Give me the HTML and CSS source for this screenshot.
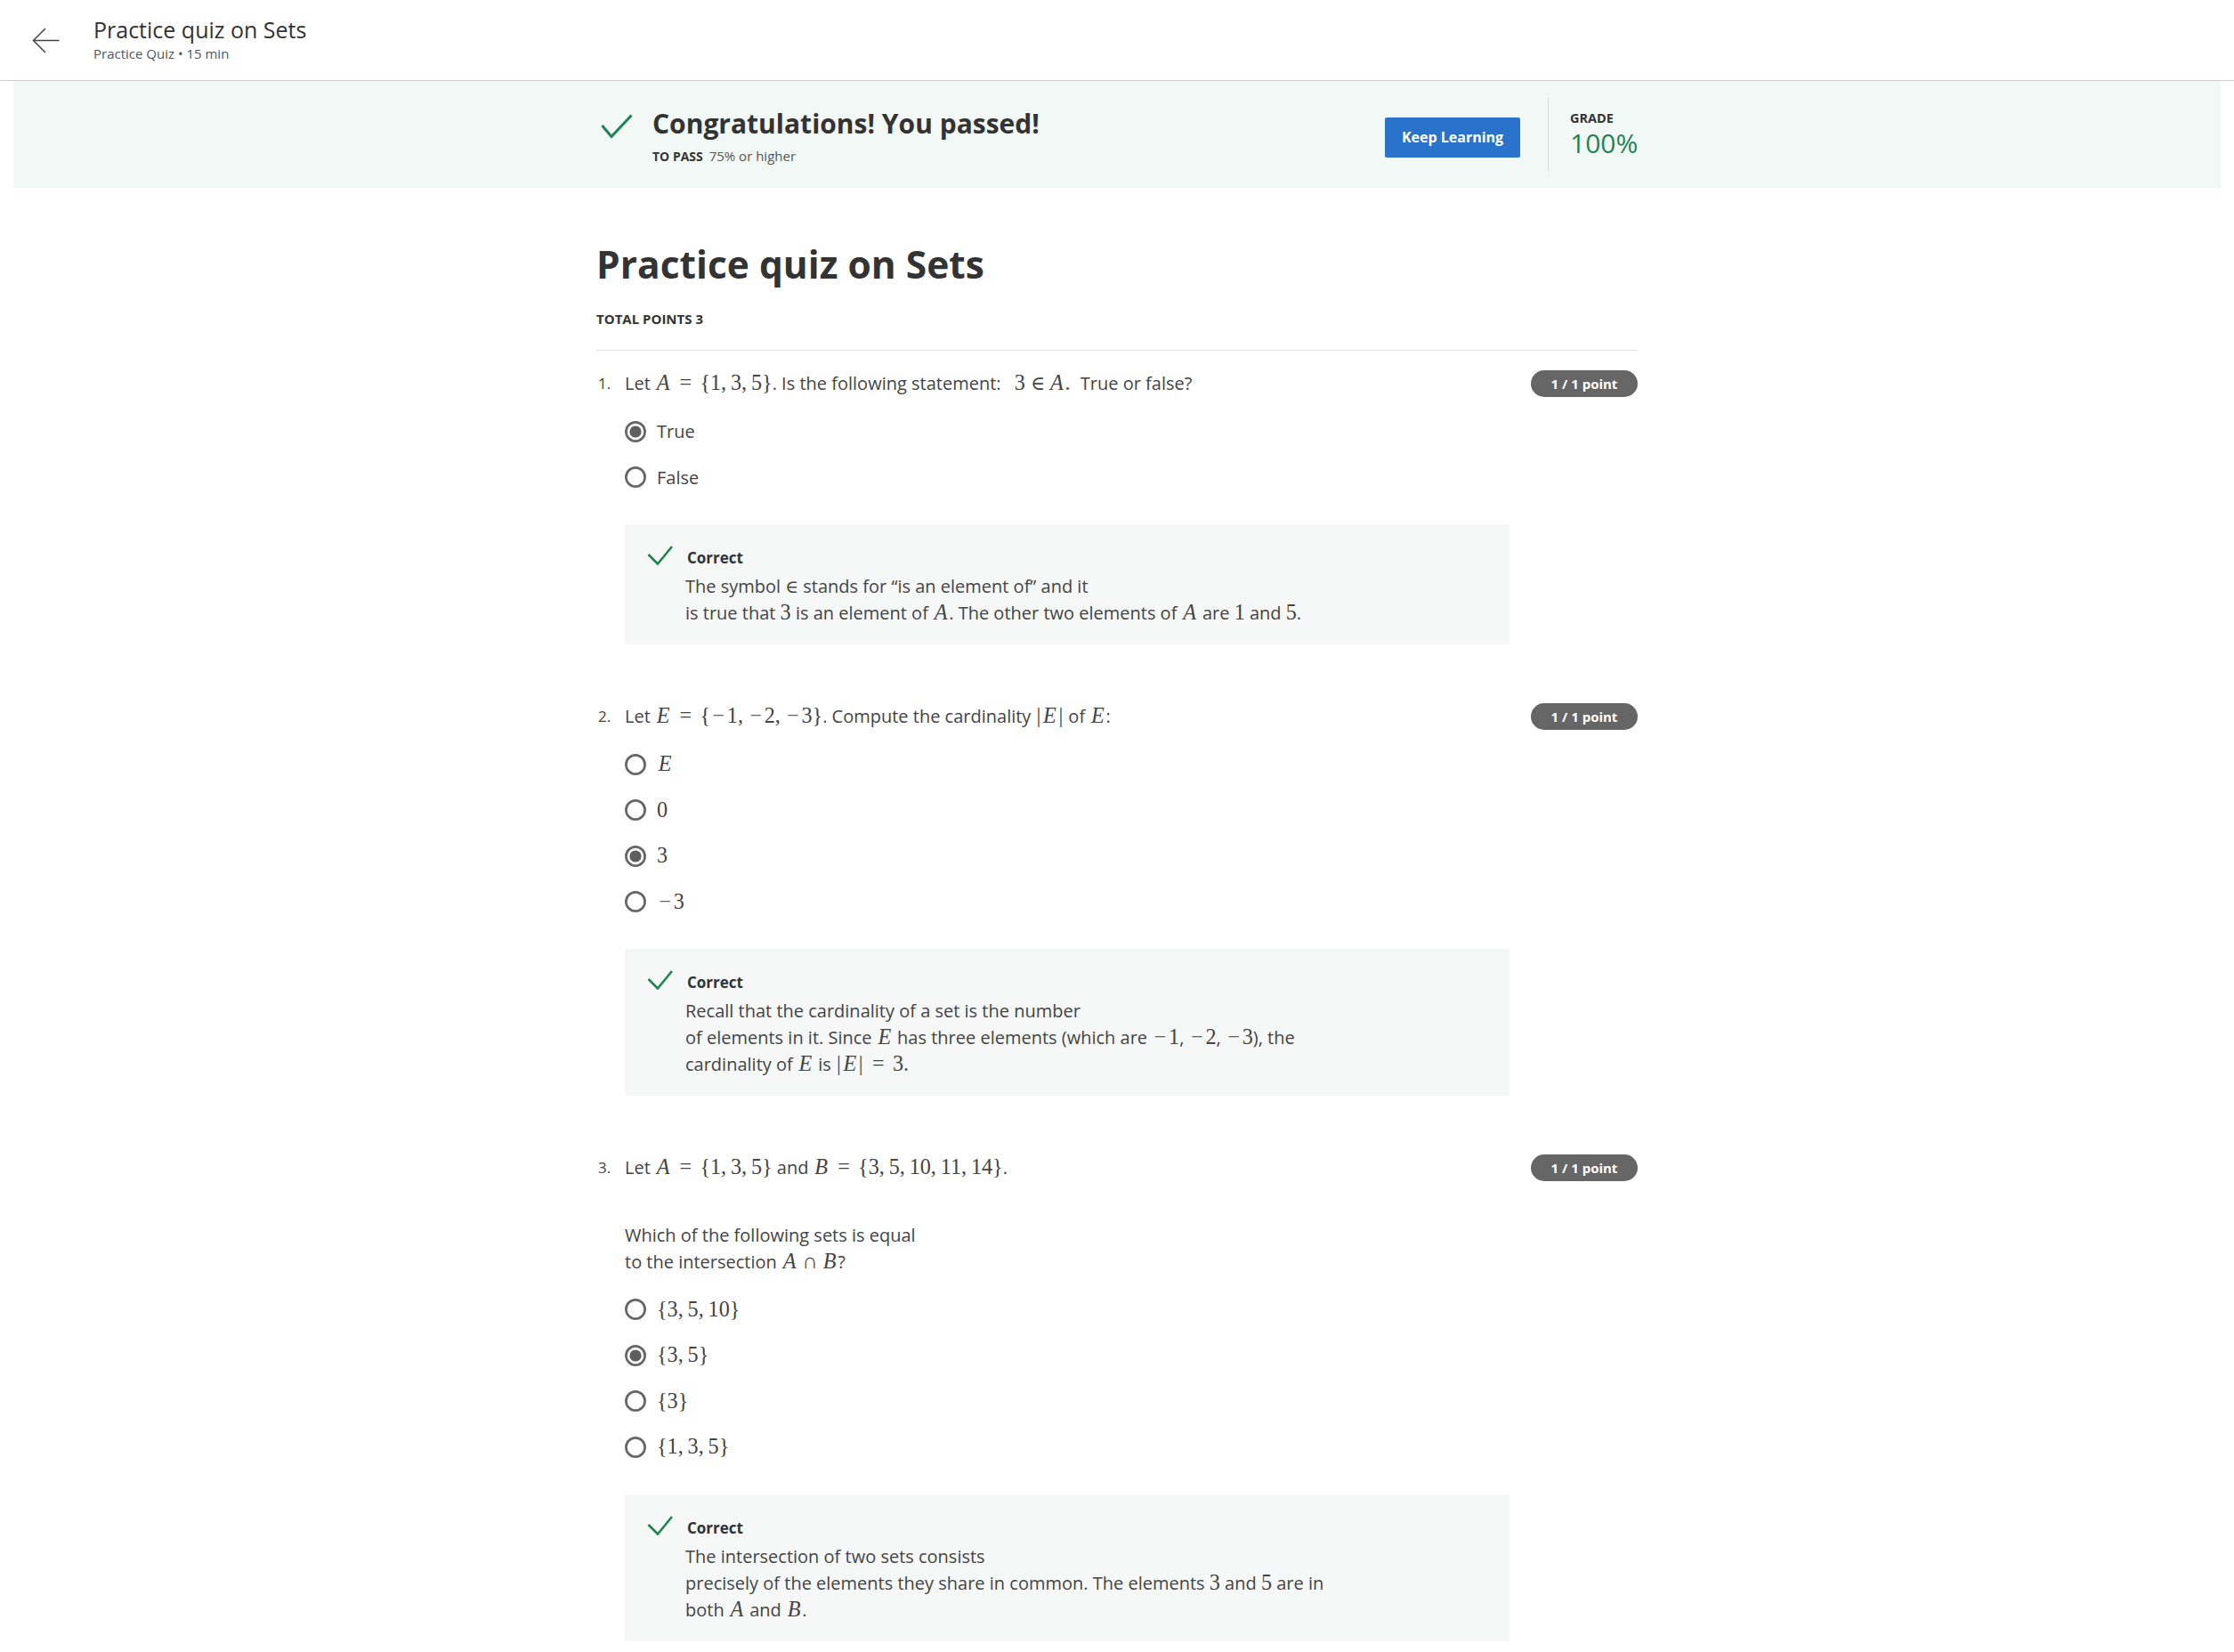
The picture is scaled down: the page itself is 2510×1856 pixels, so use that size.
FILE: index.html
```html
<!DOCTYPE html>
<html lang="en">
<head>
<meta charset="utf-8">
<title>Practice quiz on Sets</title>
<link rel="stylesheet" href="styles.css">
</head>
<body>
<header class="topbar">
  <svg class="back" viewBox="0 0 31 29" aria-hidden="true"><path d="M1.5 14.5H30.5M15 1L1.5 14.5L15 28" fill="none" stroke="#444" stroke-width="1.5"/></svg>
  <div class="topbar-text">
    <div class="topbar-title">Practice quiz on Sets</div>
    <div class="topbar-sub">Practice Quiz • 15 min</div>
  </div>
</header>

<section class="banner">
  <div class="banner-inner">
    <div class="pass">
      <svg class="pass-icon" viewBox="0 0 36 27" aria-hidden="true"><path d="M1.5 13L12 25.5L34.5 1.5" fill="none" stroke="#1f8354" stroke-width="3"/></svg>
      <div>
        <div class="pass-title">Congratulations! You passed!</div>
        <div class="pass-req"><b>TO PASS</b> 75% or higher</div>
      </div>
    </div>
    <button class="keep">Keep Learning</button>
    <div class="vdiv"></div>
    <div class="grade">
      <div class="grade-label">GRADE</div>
      <div class="grade-val">100%</div>
    </div>
  </div>
</section>

<main class="main">
  <h1>Practice quiz on Sets</h1>
  <div class="total">TOTAL POINTS 3</div>
  <div class="rule"></div>

  <div class="q q1">
    <div class="qnum">1.</div>
    <div class="qbody">
      <div class="qtext">Let <span class="m"><i>A</i><span class="rel">=</span>{1,&#8201;3,&#8201;5}</span>. Is the following statement: <span class="m gapl">3<span class="rel el">∈</span><i>A</i>.</span> True or false?</div>
      <div class="opts">
        <div class="opt"><svg class="radio" viewBox="0 0 24 24"><circle cx="12" cy="12" r="10.6" fill="none" stroke="#666" stroke-width="2.7"/><circle cx="12" cy="12" r="6.6" fill="#5f5f5f"/></svg><span>True</span></div>
        <div class="opt"><svg class="radio" viewBox="0 0 24 24"><circle cx="12" cy="12" r="10.6" fill="none" stroke="#666" stroke-width="2.7"/></svg><span>False</span></div>
      </div>
      <div class="fb">
        <div class="fb-head"><svg class="fb-icon" viewBox="0 0 29 22"><path d="M1.5 10L12 20.5L28 1" fill="none" stroke="#1f8354" stroke-width="2.6"/></svg><span class="fb-title">Correct</span></div>
        <div class="fb-text">The symbol <span class="m sm">∈</span> stands for “is an element of” and it<br>is true that <span class="m">3</span> is an element of <span class="m"><i>A</i></span>. The other two elements of <span class="m"><i>A</i></span> are <span class="m">1</span> and <span class="m">5</span>.</div>
      </div>
    </div>
    <div class="badge">1 / 1 point</div>
  </div>

  <div class="q">
    <div class="qnum">2.</div>
    <div class="qbody">
      <div class="qtext">Let <span class="m"><i>E</i><span class="rel">=</span>{<span class="neg">−</span>1,&#8201;<span class="neg">−</span>2,&#8201;<span class="neg">−</span>3}</span>. Compute the cardinality <span class="m"><span class="bar">|</span><i>E</i><span class="bar">|</span></span> of <span class="m"><i>E</i></span>:</div>
      <div class="opts">
        <div class="opt"><svg class="radio" viewBox="0 0 24 24"><circle cx="12" cy="12" r="10.6" fill="none" stroke="#666" stroke-width="2.7"/></svg><span class="m"><i>E</i></span></div>
        <div class="opt"><svg class="radio" viewBox="0 0 24 24"><circle cx="12" cy="12" r="10.6" fill="none" stroke="#666" stroke-width="2.7"/></svg><span class="m">0</span></div>
        <div class="opt"><svg class="radio" viewBox="0 0 24 24"><circle cx="12" cy="12" r="10.6" fill="none" stroke="#666" stroke-width="2.7"/><circle cx="12" cy="12" r="6.6" fill="#5f5f5f"/></svg><span class="m">3</span></div>
        <div class="opt"><svg class="radio" viewBox="0 0 24 24"><circle cx="12" cy="12" r="10.6" fill="none" stroke="#666" stroke-width="2.7"/></svg><span class="m"><span class="neg">−</span>3</span></div>
      </div>
      <div class="fb">
        <div class="fb-head"><svg class="fb-icon" viewBox="0 0 29 22"><path d="M1.5 10L12 20.5L28 1" fill="none" stroke="#1f8354" stroke-width="2.6"/></svg><span class="fb-title">Correct</span></div>
        <div class="fb-text">Recall that the cardinality of a set is the number<br>of elements in it. Since <span class="m"><i>E</i></span> has three elements (which are <span class="m"><span class="neg">−</span>1</span>, <span class="m"><span class="neg">−</span>2</span>, <span class="m"><span class="neg">−</span>3</span>), the<br>cardinality of <span class="m"><i>E</i></span> is <span class="m"><span class="bar">|</span><i>E</i><span class="bar">|</span><span class="rel">=</span>3.</span></div>
      </div>
    </div>
    <div class="badge">1 / 1 point</div>
  </div>

  <div class="q">
    <div class="qnum">3.</div>
    <div class="qbody">
      <div class="qtext">Let <span class="m"><i>A</i><span class="rel">=</span>{1,&#8201;3,&#8201;5}</span> and <span class="m"><i>B</i><span class="rel">=</span>{3,&#8201;5,&#8201;10,&#8201;11,&#8201;14}</span>.</div>
      <p class="qtext qpara">Which of the following sets is equal<br>to the intersection <span class="m"><i>A</i><span class="bin">∩</span><i>B</i></span>?</p>
      <div class="opts">
        <div class="opt"><svg class="radio" viewBox="0 0 24 24"><circle cx="12" cy="12" r="10.6" fill="none" stroke="#666" stroke-width="2.7"/></svg><span class="m">{3,&#8201;5,&#8201;10}</span></div>
        <div class="opt"><svg class="radio" viewBox="0 0 24 24"><circle cx="12" cy="12" r="10.6" fill="none" stroke="#666" stroke-width="2.7"/><circle cx="12" cy="12" r="6.6" fill="#5f5f5f"/></svg><span class="m">{3,&#8201;5}</span></div>
        <div class="opt"><svg class="radio" viewBox="0 0 24 24"><circle cx="12" cy="12" r="10.6" fill="none" stroke="#666" stroke-width="2.7"/></svg><span class="m">{3}</span></div>
        <div class="opt"><svg class="radio" viewBox="0 0 24 24"><circle cx="12" cy="12" r="10.6" fill="none" stroke="#666" stroke-width="2.7"/></svg><span class="m">{1,&#8201;3,&#8201;5}</span></div>
      </div>
      <div class="fb">
        <div class="fb-head"><svg class="fb-icon" viewBox="0 0 29 22"><path d="M1.5 10L12 20.5L28 1" fill="none" stroke="#1f8354" stroke-width="2.6"/></svg><span class="fb-title">Correct</span></div>
        <div class="fb-text">The intersection of two sets consists<br>precisely of the elements they share in common. The elements <span class="m">3</span> and <span class="m">5</span> are in<br>both <span class="m"><i>A</i></span> and <span class="m"><i>B</i></span>.</div>
      </div>
    </div>
    <div class="badge">1 / 1 point</div>
  </div>
</main>
</body>
</html>
```

FILE: styles.css
```css
* { box-sizing: border-box; margin: 0; padding: 0; }

body {
  font-family: "Open Sans", "Liberation Sans", sans-serif;
  color: #333;
  background: #fff;
}

/* top bar */
.topbar {
  height: 91px;
  border-bottom: 1px solid #cfcfcf;
  display: flex;
  align-items: flex-start;
  padding: 17px 0 0 36px;
}
.back { width: 31px; height: 29px; margin: 14px 38px 0 0; display: block; flex: none; }
.topbar-title { font-size: 25px; line-height: 32px; color: #333; }
.topbar-sub { font-size: 15px; line-height: 20px; margin-top: 1px; color: #555; }

/* pass banner */
.banner { margin: 0 15px; height: 120px; background: #f2f8f5; }
.banner-inner { width: 1170px; margin: 0 auto; display: flex; align-items: flex-start; }
.pass { flex: 1; display: flex; align-items: flex-start; margin-top: 30px; }
.pass-icon { width: 36px; height: 27px; margin: 7px 22px 0 5px; flex: none; }
.pass-title { font-size: 30px; font-weight: 700; line-height: 36px; color: #333; }
.pass-req { margin-top: 8px; font-size: 15px; line-height: 20px; color: #555; }
.pass-req b { font-size: 14px; color: #333; margin-right: 3px; }
.keep {
  margin-top: 41px;
  width: 152px;
  height: 45px;
  background: #2a73cc;
  color: #fff;
  font-family: "Open Sans", sans-serif;
  font-size: 16px;
  font-weight: 700;
  line-height: 45px;
  text-align: center;
  border: none;
  border-radius: 2px;
}
.vdiv { width: 1px; height: 84px; background: #dcdcdc; margin: 18px 24px 0 31px; }
.grade { margin-top: 33px; width: 76px; }
.grade-label { font-size: 14.5px; font-weight: 700; line-height: 18px; color: #333; }
.grade-val { font-size: 30px; line-height: 34px; color: #1f8354; margin-top: 2px; }

/* main */
.main { width: 1170px; margin: 0 auto; padding-top: 60px; padding-bottom: 60px; }
h1 { font-size: 42.5px; line-height: 52px; font-weight: 700; color: #333; }
.total { margin-top: 25px; font-size: 15px; font-weight: 700; line-height: 20px; color: #333; }
.rule { height: 1px; background: #e1e1e1; margin-top: 25px; }

.q { display: flex; align-items: flex-start; margin-top: 66px; }
.q1 { margin-top: 22px; }
.qnum { width: 32px; flex: none; padding-left: 2px; font-size: 17px; line-height: 30px; color: #444; }
.qbody { width: 994px; flex: none; }
.qtext { font-size: 20px; line-height: 30px; color: #444; }
.qpara { margin-top: 45.5px; }
.badge {
  margin-left: 24px;
  width: 120px;
  height: 30px;
  flex: none;
  border-radius: 15px;
  background: #666;
  color: #fff;
  font-size: 15px;
  font-weight: 700;
  line-height: 30px;
  text-align: center;
}

/* math */
.m {
  font-family: "Liberation Serif", "DejaVu Serif", serif;
  font-size: 1.21em;
  line-height: 1;
  white-space: nowrap;
}
.m i { font-style: italic; display: inline-block; width: .75em; text-align: center; }
.m.sm { font-size: 1em; }
.rel { display: inline-block; width: .778em; margin: 0 .2778em; text-align: center; }
.rel.el { width: .667em; font-size: .9em; }
.bin { display: inline-block; width: .667em; margin: 0 .2222em; text-align: center; }
.neg { display: inline-block; width: .778em; text-align: center; }
.bar { display: inline-block; width: .278em; text-align: center; }
.gapl { margin-left: 10px; margin-right: 6px; }

/* options */
.opts { margin-top: 23.5px; }
.opt { display: flex; align-items: center; height: 30px; font-size: 20px; color: #444; }
.opt + .opt { margin-top: 21.5px; }
.radio { width: 24px; height: 24px; margin-right: 12px; flex: none; display: block; }

/* feedback */
.fb { margin-top: 38px; background: #f5f8f7; padding: 24px 25px 20px; }
.fb-head { display: flex; align-items: flex-start; }
.fb-icon { width: 29px; height: 22px; margin-right: 16px; flex: none; }
.fb-title { margin-top: 2px; font-size: 17px; font-weight: 700; line-height: 24px; color: #333; }
.fb-text { margin: 5px 0 0 43px; font-size: 20px; line-height: 30px; color: #444; }
```
